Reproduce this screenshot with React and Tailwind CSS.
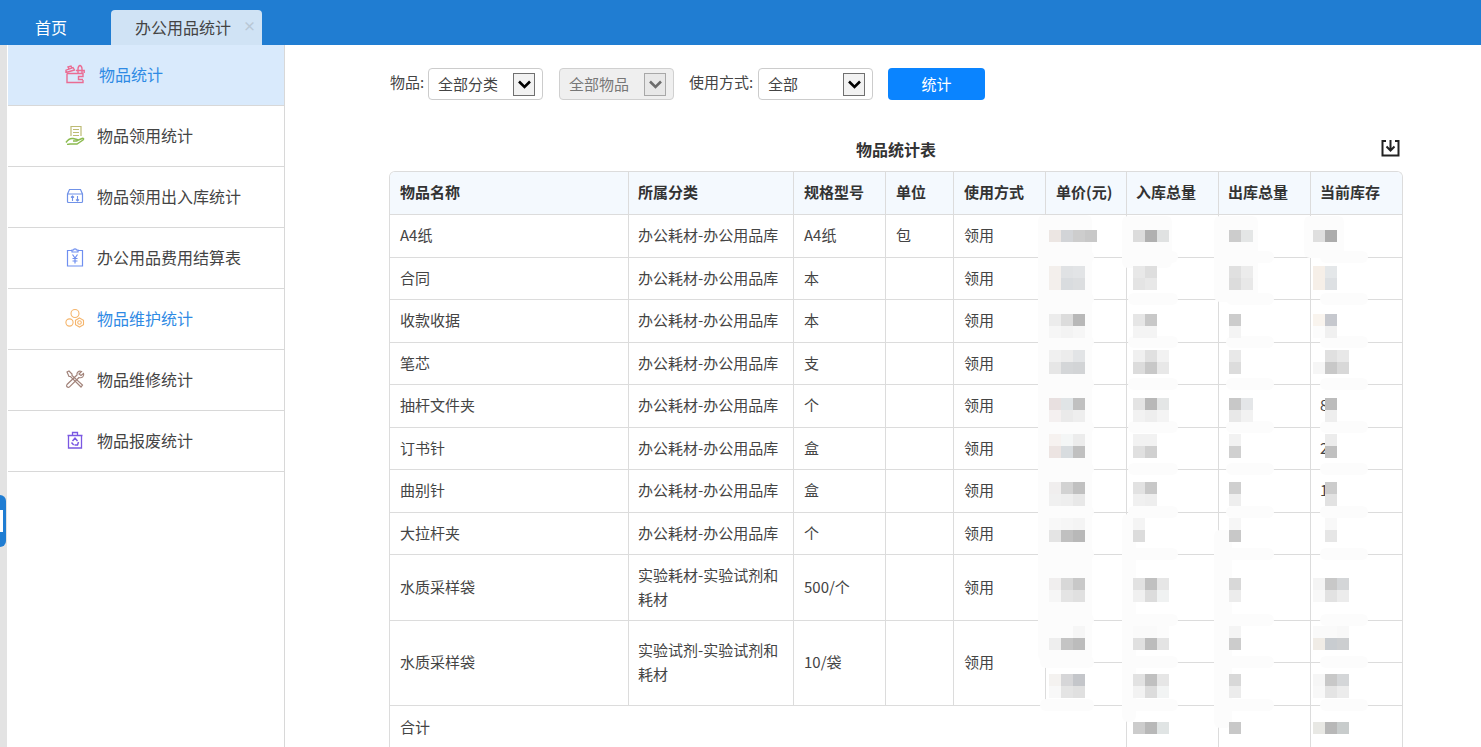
import React from "react";

const Gift = () => (
  <svg width="20" height="20" viewBox="0 0 20 20" fill="none" stroke="#ea6c93" strokeWidth="1.4">
    <path d="M2 9.5V18.5H18V16M2 9.5H18V12.5H13.5V15.5H18" />
    <path d="M1 9V6.2L8 3.5L9.5 6L1 8.5M4 5.2L3 3L6 2L7 4.2" />
    <path d="M13 9V5C13 3 14.2 1.5 15 1.5C15.8 1.5 17 3 17 5V9M11 6.5H19.2V9" />
  </svg>
);
const HandDoc = () => (
  <svg width="20" height="20" viewBox="0 0 20 20" fill="none" strokeWidth="1.2">
    <path d="M6 11V1.5H16V11M8 4.5H14M8 7.5H14M8 10.5H14" stroke="#bdbb74" />
    <path d="M1 17.5C3 14.5 5 13 8 13.5L12 14.5C13 15 12.5 16 11.5 16H8M11 16L17 13.5C18.5 13 19 14 18 15L12 19H5L2 19.5" stroke="#8cbb50" strokeWidth="1.5" />
  </svg>
);
const BoxArrows = () => (
  <svg width="20" height="20" viewBox="0 0 20 20" fill="none" stroke="#7092e8" strokeWidth="1.2">
    <path d="M2.5 8L4.5 3.5H15.5L17.5 8V15.5C17.5 16.3 17 16.5 16.5 16.5H3.5C3 16.5 2.5 16.3 2.5 15.5V8ZM2.5 8H17.5" />
    <path d="M7.5 15V10M6 11.5L7.5 10L9 11.5M12.5 10V15M11 13.5L12.5 15L14 13.5" strokeWidth="1.1" />
  </svg>
);
const ClipYen = () => (
  <svg width="20" height="20" viewBox="0 0 20 20" fill="none" stroke="#6f8ff0" strokeWidth="1.2">
    <path d="M7 3.5H2.5V19H17.5V3.5H13" />
    <path d="M7 5V3H8.5C8.5 1.4 11.5 1.4 11.5 3H13V5H7Z" />
    <path d="M7.5 7.5L10 11L12.5 7.5M10 11V16.5M7.5 11.5H12.5M7.5 14H12.5" />
  </svg>
);
const Circles = () => (
  <svg width="20" height="20" viewBox="0 0 20 20" fill="none" stroke="#f5b56c" strokeWidth="1.1">
    <circle cx="10" cy="5.5" r="4" />
    <circle cx="4.5" cy="14.5" r="3.6" />
    <path d="M14.5 10L18.5 12.3V16.7L14.5 19L10.5 16.7V12.3L14.5 10Z" />
    <circle cx="14.5" cy="14.5" r="1.8" />
  </svg>
);
const Tools = () => (
  <svg width="20" height="20" viewBox="0 0 20 20" fill="none" stroke="#a2837a" strokeWidth="1.2">
    <path d="M2 3L4 2L7 5V6.5L17.5 16L16 18L5.5 7.5H4L2 3Z" />
    <path d="M18.5 4.5L16 6.5L14 5L16.5 2.5C13.5 1.5 11.5 3.5 12 6L2 15.5C1.3 16.5 1.5 17.3 2 17.8C3 18.6 4 18.3 4.5 17.8L14 8.5C17 9.5 19.5 7.2 18.5 4.5Z" />
  </svg>
);
const Trash = () => (
  <svg width="20" height="20" viewBox="0 0 20 20" fill="none" stroke="#7a58e2" strokeWidth="1.3">
    <path d="M2.5 5.5H17.5M7.5 5.5V2.5H12.5V5.5M3.5 5.5V18H16.5V5.5" />
    <path d="M7.5 11L10 8.2L12.5 11M13.5 12L12.5 15H9.5M8.7 15L6.5 12.5" strokeWidth="1.5" />
  </svg>
);
const Chevron = ({ color }) => (
  <svg width="13" height="9" viewBox="0 0 13 9" fill="none" stroke={color} strokeWidth="2.6">
    <path d="M1 1.5L6.5 7L12 1.5" />
  </svg>
);

const nav = [
  { t: "物品统计", I: Gift, active: true },
  { t: "物品领用统计", I: HandDoc },
  { t: "物品领用出入库统计", I: BoxArrows },
  { t: "办公用品费用结算表", I: ClipYen },
  { t: "物品维护统计", I: Circles, blue: true },
  { t: "物品维修统计", I: Tools },
  { t: "物品报废统计", I: Trash },
];

const rows = [
  { h: "h-[43px]", n: "A4纸", c: "办公耗材-办公用品库", s: "A4纸", u: "包" },
  { h: "h-[42px]", n: "合同", c: "办公耗材-办公用品库", s: "本", price: ")" },
  { h: "h-[43px]", n: "收款收据", c: "办公耗材-办公用品库", s: "本" },
  { h: "h-[42px]", n: "笔芯", c: "办公耗材-办公用品库", s: "支" },
  { h: "h-[43px]", n: "抽杆文件夹", c: "办公耗材-办公用品库", s: "个", stock: "8" },
  { h: "h-[42px]", n: "订书针", c: "办公耗材-办公用品库", s: "盒", stock: "2" },
  { h: "h-[43px]", n: "曲别针", c: "办公耗材-办公用品库", s: "盒", stock: "1" },
  { h: "h-[42px]", n: "大拉杆夹", c: "办公耗材-办公用品库", s: "个" },
  { h: "h-[66px]", n: "水质采样袋", c: "实验耗材-实验试剂和耗材", s: "500/个" },
];

const base = "border-b border-[#dcdcdc] pb-[2px] align-middle";
const td = "border-r " + base + " pl-[10px] pr-[8px]";
const td9 = "border-r " + base + " pl-[9px] pr-[4px]";
const tdLast = base + " pl-[9px] pr-[9px]";
const ths = [
  ["物品名称", td],
  ["所属分类", td9],
  ["规格型号", td],
  ["单位", td],
  ["使用方式", td],
  ["单价(元)", td],
  ["入库总量", td9],
  ["出库总量", td9],
  ["当前库存", tdLast],
];

/* Redaction layer: page coordinates of the smears and mosaic squares. */
const smears = [
  [1038, 215, 54, 446], [1122, 216, 50, 52], [1214, 216, 44, 86], [1304, 216, 40, 42],
  [1122, 514, 14, 208], [1214, 530, 18, 198],
  ...[257, 299, 342, 384, 427, 469, 512, 554, 620, 662, 705].flatMap((y) => [
    [1040, y - 6, 54, 12], [1128, y - 6, 50, 12], [1226, y - 6, 48, 12], [1320, y - 6, 48, 12],
  ]),
];

const A = 1049, B = 1133, C = 1229, D = 1313;
const mosaics = [
  [A, 230, [["#ece6e3", "#d2d4d7", "#cdcdcd", "#c8c8c8"]]],
  [B, 230, [["#dcdcdc", "#b0b0b0", "#e0e2e2"]]],
  [C, 230, [["#cccccc", "#e4e6e6"]]],
  [D, 230, [["#dfdfdf", "#acacac"]]],

  [A, 266, [["#f3efec", "#e0e2e4", "#e2e4e6"], ["#f3efec", "#d9dcdf", "#dcdee0"]]],
  [B, 266, [["#e8e8e8", "#dedede"], ["#e4e4e4", "#e8e8e8"]]],
  [C, 266, [["#e0e0e0", "#ececec"], ["#dcdcdc", "#e8e8e8"]]],
  [D, 266, [["#f6efe8", "#e4e7e9"], ["#f6efe8", "#dde0e3"]]],

  [A, 314, [["#ececec", "#dcdcdc", "#b8b8b8"], ["#f6f6f6", "#f3f3f3", "#f6f6f6"]]],
  [B, 314, [["#e6e6e6", "#c8c8c8"], ["#f4f4f4", "#f4f4f4"]]],
  [C, 314, [["#cccccc"], ["#f4f4f4"]]],
  [D, 314, [["#f9f4ee", "#c6c8ce"], ["#fcfcfc", "#f0f0f0"]]],

  [A, 350, [["#f0f0f0", "#ececec", "#e2e4e6"], ["#e6e6e6", "#d4d6d8", "#d2d4d6"]]],
  [B, 350, [["#f0f0f0", "#e0e0e0", "#f2f2f2"], ["#dcdcdc", "#c8c8c8", "#e8e8e8"]]],
  [C, 350, [["#e8e8e8"], ["#dcdcdc"]]],
  [D, 350, [["#ffffff", "#e0e0e0", "#e8e8e8"], ["#f6f6f6", "#c8c8c8", "#d8d8d8"]]],

  [A, 398, [["#e8e0e0", "#e0e4e6", "#c0c0c0"], ["#f4f0f0", "#eaeaea", "#eeeeee"]]],
  [B, 398, [["#e4e4e4", "#b8b8b8", "#e4e6e6"], ["#f2f2f2", "#eeeeee", "#f4f4f4"]]],
  [C, 398, [["#c8c8c8", "#e4e6e8"], ["#e8e8e8", "#f2f2f2"]]],
  [D + 12, 398, [["#bcbcbc"], ["#eeeeee"]]],

  [A, 434, [["#f6f2f0", "#f4f6f6", "#ececec"], ["#ece4e2", "#d8dcdf", "#c0c0c0"]]],
  [B, 434, [["#f2f2f2", "#f2f2f2"], ["#e0e0e0", "#d0d0d0"]]],
  [C, 434, [["#f2f2f2"], ["#d0d0d0"]]],
  [D + 12, 434, [["#ececec"], ["#c0c0c0"]]],

  [A, 482, [["#f0eeee", "#d2d2d2", "#c0c0c0"], ["#f0f0f0", "#eeeeee", "#e8e8e8"]]],
  [B, 482, [["#e2e2e2", "#c8c8c8"], ["#f0f0f0", "#eeeeee"]]],
  [C, 482, [["#cfcfcf"], ["#eeeeee"]]],
  [D + 12, 482, [["#cccccc"], ["#e2e2e2"]]],

  [A, 518, [["#f8f8f8", "#f6f6f6", "#f4f4f4"], ["#e4e4e4", "#c0c0c0", "#b8b8b8"]]],
  [B, 518, [["#f4f4f4"], ["#dcdcdc"]]],
  [C, 518, [["#f6f6f6"], ["#c8c8c8"]]],
  [D + 12, 518, [["#f8f8f8"], ["#e6e6e6"]]],

  [A, 578, [["#f0eeee", "#d8d8d8", "#c8c8c8"], ["#f6f6f6", "#e4e4e4", "#e0e0e0"]]],
  [B, 578, [["#e2e2e2", "#c0c0c0", "#e6e6e6"], ["#f0f0f0", "#dcdcdc", "#f0f2f2"]]],
  [C, 578, [["#d8d8d8"], ["#ececec"]]],
  [D, 578, [["#f4f4f4", "#c8c8c8", "#d4d6d8"], ["#f8f8f8", "#e2e2e2", "#ececec"]]],

  [A, 626, [["#fcfcfc", "#fcfcfc", "#f6f6f6"], ["#eeeeee", "#c4c4c4", "#bcbcbc"]]],
  [B, 626, [["#fafafa", "#fafafa", "#fcfcfc"], ["#e0e0e0", "#bcbcbc", "#e4e4e4"]]],
  [C, 626, [["#f4f4f4"], ["#cccccc"]]],
  [D, 626, [["#fafafa", "#fafafa", "#f8f8f8"], ["#f0ece6", "#c8ccd0", "#ccced0"]]],

  [A, 674, [["#f4f2f0", "#d6d6d8", "#c4c6ca"], ["#f8f8f8", "#e4e4e4", "#e0e0e0"]]],
  [B, 674, [["#e2e2e2", "#c0c0c0", "#e6e6e6"], ["#f2f2f2", "#dcdcdc", "#f2f4f4"]]],
  [C, 674, [["#d8d8d8"], ["#ececec"]]],
  [D, 674, [["#f6f6f6", "#c8c8c8", "#d4d6d8"], ["#f8f8f8", "#e4e4e4", "#ececec"]]],

  [B, 722, [["#cccccc", "#b8b8b8", "#e0e4e4"]]],
  [C, 722, [["#c8c8c8"]]],
  [D, 722, [["#e8e8e4", "#b8b8b8", "#c8cccc"]]],
];

const OX = 389, OY = 171;

function Redaction() {
  return (
    <div className="absolute left-0 top-0 w-0 h-0">
      {smears.map(([x, y, w, h], i) => (
        <div
          key={"s" + i}
          className="absolute rounded-[6px] bg-[#fcfcfc]"
          style={{ left: x - OX, top: y - OY, width: w, height: h }}
        />
      ))}
      {mosaics.map(([x, y, grid], i) => (
        <div key={"m" + i} className="absolute flex flex-col" style={{ left: x - OX, top: y - OY }}>
          {grid.map((r, j) => (
            <div key={j} className="flex">
              {r.map((c, k) => (
                <div key={k} className="w-[12px] h-[12px]" style={{ background: c }} />
              ))}
            </div>
          ))}
        </div>
      ))}
    </div>
  );
}

function Select({ text, disabled }) {
  return (
    <div
      className={
        "w-[115px] h-[32px] rounded-[4px] border flex items-center justify-between pl-[9px] pr-[7px] text-[15px] " +
        (disabled ? "bg-[#efefef] border-[#d0d0d0] text-[#777777]" : "bg-white border-[#cccccc] text-[#444444]")
      }
    >
      <span>{text}</span>
      <span
        className={
          "w-[22px] h-[23px] border flex items-center justify-center " +
          (disabled ? "border-[#a8a8a8] bg-[#e8e8e8]" : "border-[#707070] bg-[#f2f2f2]")
        }
      >
        <Chevron color={disabled ? "#6d6d6d" : "#000000"} />
      </span>
    </div>
  );
}

export default function App() {
  return (
    <div
      className="w-[1481px] h-[747px] overflow-hidden bg-white text-[#333333] relative"
      style={{ fontFamily: '"Noto Sans CJK SC", "Noto Sans", sans-serif' }}
    >
      <header className="h-[45px] bg-[#207dd2] flex items-end">
        <div className="w-[111px] h-[35px] pl-[35px] pb-[2px] flex items-center text-white text-[16px]">首页</div>
        <div className="w-[151px] h-[35px] rounded-t-[4px] bg-[#d0e3f5] flex items-center pl-[24px] pb-[2px] text-[16px] text-[#444444] relative">
          办公用品统计
          <span className="absolute left-[132px] top-[4px] text-[#b9c8d6] text-[13px] font-bold leading-[24px]">×</span>
        </div>
      </header>

      <div className="flex h-[702px]">
        <div className="w-[7px] bg-[#e3e3e3] relative shrink-0">
          <div className="absolute left-0 top-[450px] w-[6px] h-[52px] rounded-r-[6px] bg-[#207dd2]">
            <div className="absolute left-0 top-[15px] w-[3px] h-[22px] bg-white" />
          </div>
        </div>
        <aside className="w-[278px] shrink-0 border-r border-l border-l-white border-r-[#d8d8d8] bg-white">
          {nav.map(({ t, I, active, blue }) => (
            <div
              key={t}
              className={
                "h-[61px] border-b border-[#d8d8d8] flex items-center pl-[57px] pb-[2px] text-[16px] " +
                (active ? "bg-[#d9eafc] text-[#2f8ae4]" : blue ? "text-[#2f8ae4]" : "text-[#444444]")
              }
            >
              <span className={"w-[20px] h-[20px] flex " + (active ? "mr-[14px]" : "mr-[12px]")}>
                <I />
              </span>
              {t}
            </div>
          ))}
        </aside>

        <main className="pl-[104px] w-[1118px] shrink-0">
          <div className="flex items-center h-[32px] mt-[23px] text-[15px] text-[#444444]">
            <span className="ml-px w-[38px] -mt-[3px]">物品:</span>
            <Select text="全部分类" />
            <span className="w-[16px]" />
            <Select text="全部物品" disabled />
            <span className="w-[15px]" />
            <span className="w-[69px] -mt-[3px]">使用方式:</span>
            <Select text="全部" />
            <button className="ml-[15px] w-[97px] h-[32px] rounded-[4px] bg-[#0a84ff] text-white text-[15px]">统计</button>
          </div>

          <div className="relative h-[71px] flex items-start justify-center pt-[36px] text-[16px] font-bold leading-[26px] w-[1014px]">
            物品统计表
            <svg className="absolute right-[3px] top-[39px]" width="19" height="18" viewBox="0 0 19 18" fill="none" stroke="#222222" strokeWidth="2">
              <path d="M5 2H1.5V16.5H17.5V2H14" />
              <path d="M9.5 1V11M5.5 7.5L9.5 11.5L13.5 7.5" />
            </svg>
          </div>

          <div className="relative w-[1014px]">
            <div className="border border-[#dcdcdc] rounded-t-[6px] overflow-hidden border-b-0">
              <table className="table-fixed border-separate border-spacing-0 w-[1012px] text-[15px] leading-[24px]">
                <colgroup>
                  <col className="w-[239px]" />
                  <col className="w-[165px]" />
                  <col className="w-[92px]" />
                  <col className="w-[68px]" />
                  <col className="w-[92px]" />
                  <col className="w-[81px]" />
                  <col className="w-[92px]" />
                  <col className="w-[92px]" />
                  <col className="w-[91px]" />
                </colgroup>
                <thead>
                  <tr className="h-[43px] bg-[#f4f9fe]">
                    {ths.map(([h, c]) => (
                      <th key={h} className={c + " text-left font-bold"}>{h}</th>
                    ))}
                  </tr>
                </thead>
                <tbody className="text-[#444444]">
                  {rows.map((r, i) => (
                    <tr key={i} className={r.h}>
                      <td className={td}>{r.n}</td>
                      <td className={td9}>{r.c}</td>
                      <td className={td}>{r.s}</td>
                      <td className={td}>{r.u}</td>
                      <td className={td}>领用</td>
                      <td className={td + (r.price ? " pl-[40px]" : "")}>{r.price}</td>
                      <td className={td9}></td>
                      <td className={td9}></td>
                      <td className={tdLast}>{r.stock}</td>
                    </tr>
                  ))}
                  <tr className="h-[42px]">
                    <td rowSpan={2} className={td}>水质采样袋</td>
                    <td rowSpan={2} className={td9}>实验试剂-实验试剂和耗材</td>
                    <td rowSpan={2} className={td}>10/袋</td>
                    <td rowSpan={2} className={td}></td>
                    <td rowSpan={2} className={td}>领用</td>
                    <td className={td}></td>
                    <td className={td9}></td>
                    <td className={td9}></td>
                    <td className={tdLast}></td>
                  </tr>
                  <tr className="h-[43px]">
                    <td className={td}></td>
                    <td className={td9}></td>
                    <td className={td9}></td>
                    <td className={tdLast}></td>
                  </tr>
                  <tr className="h-[44px]">
                    <td colSpan={6} className={td}>合计</td>
                    <td className={td9}></td>
                    <td className={td9}></td>
                    <td className={tdLast}></td>
                  </tr>
                </tbody>
              </table>
            </div>
            <Redaction />
          </div>
        </main>
      </div>
    </div>
  );
}
